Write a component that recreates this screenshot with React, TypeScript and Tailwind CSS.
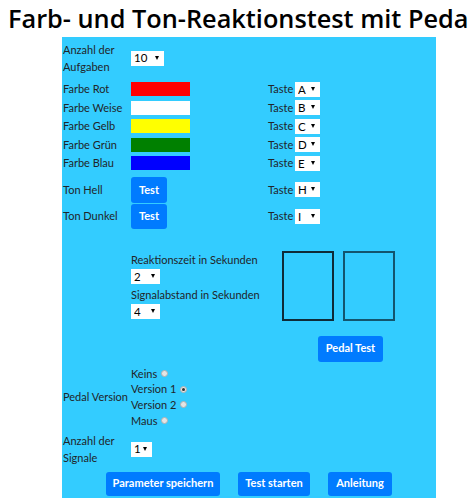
import React from 'react';

const font = { fontFamily: 'Lato, "Open Sans", "Liberation Sans", sans-serif' };
const titleFont = { fontFamily: '"Open Sans", "Liberation Sans", sans-serif' };

const Select: React.FC<{ value: string; options: string[]; width: string }> = ({ value, options, width }) => (
  <span className={`relative inline-flex h-[15px] shrink-0 items-center bg-white ${width}`}>
    <select
      defaultValue={value}
      className="h-full w-full appearance-none bg-transparent pl-[3px] text-[11.5px] leading-none text-black outline-none"
    >
      {options.map((o) => (
        <option key={o}>{o}</option>
      ))}
    </select>
    <span className="pointer-events-none absolute right-[5px] top-[5px] h-0 w-0 border-x-[2.5px] border-t-[4px] border-x-transparent border-t-black" />
  </span>
);

const Button: React.FC<{ children: React.ReactNode; className?: string }> = ({ children, className = '' }) => (
  <button
    className={`flex shrink-0 items-center justify-center whitespace-nowrap rounded-[3px] bg-[#007bff] text-[11px] font-bold text-white ${className}`}
  >
    {children}
  </button>
);

const Radio: React.FC<{ checked?: boolean }> = ({ checked }) => (
  <span className="ml-[4px] inline-flex h-[7px] w-[7px] items-center justify-center rounded-full border border-[#b0b0b0] bg-[#e4e4e4]">
    {checked && <span className="h-[3px] w-[3px] rounded-full bg-[#333]" />}
  </span>
);

const letters = ['A', 'B', 'C', 'D', 'E', 'F', 'G', 'H', 'I', 'J', 'K'];

const colors = [
  { name: 'Farbe Rot', bg: 'bg-[#ff0000]', key: 'A' },
  { name: 'Farbe Weise', bg: 'bg-white', key: 'B' },
  { name: 'Farbe Gelb', bg: 'bg-[#ffff00]', key: 'C' },
  { name: 'Farbe Grün', bg: 'bg-[#008000]', key: 'D' },
  { name: 'Farbe Blau', bg: 'bg-[#0000ff]', key: 'E' },
];

const Taste: React.FC<{ k: string }> = ({ k }) => (
  <div className="ml-auto flex w-[52px] items-center">
    <span className="w-[27px] shrink-0">Taste</span>
    <Select value={k} options={letters} width="w-[25px]" />
  </div>
);

export default function App() {
  return (
    <div className="h-[500px] w-[469px] overflow-hidden bg-white text-[#212529]" style={font}>
      <h1
        className="h-[37px] whitespace-nowrap pl-[8px] pt-[3px] text-[25.3px] font-semibold leading-[30px] text-black"
        style={titleFont}
      >
        Farb- und Ton-Reaktionstest mit Pedal
      </h1>
      <div className="ml-[62px] flex h-[461px] w-[374px] flex-col bg-[#33ccff] pl-[1px] pt-[3px] text-[11px]">
        {/* Anzahl der Aufgaben */}
        <div className="flex h-[36px] items-center">
          <div className="w-[68px] leading-[17px]">
            Anzahl der
            <br />
            Aufgaben
          </div>
          <Select value="10" options={['5', '10', '15', '20']} width="w-[33px]" />
        </div>

        {/* Farben */}
        <div className="mt-[4px] flex w-[257px] flex-col">
          {colors.map((c) => (
            <div key={c.name} className="flex h-[18.5px] items-center">
              <div className="w-[68px]">{c.name}</div>
              <div className={`h-[14px] w-[59px] ${c.bg}`} />
              <Taste k={c.key} />
            </div>
          ))}
        </div>

        {/* Töne */}
        <div className="mt-[4.5px] flex w-[257px] flex-col gap-[1px]">
          {[
            { name: 'Ton Hell', key: 'H' },
            { name: 'Ton Dunkel', key: 'I' },
          ].map((t) => (
            <div key={t.name} className="flex h-[25.5px] items-center">
              <div className="w-[68px]">{t.name}</div>
              <Button className="h-[25.5px] w-[36px]">Test</Button>
              <Taste k={t.key} />
            </div>
          ))}
        </div>

        {/* Zeiten und Pedal-Anzeige */}
        <div className="mt-[21.5px] flex pl-[68px]">
          <div className="w-[151px] leading-[17px]">
            <div>Reaktionszeit in Sekunden</div>
            <Select value="2" options={['1', '2', '3', '4', '5']} width="w-[29px]" />
            <div className="mt-[1px]">Signalabstand in Sekunden</div>
            <Select value="4" options={['2', '3', '4', '5', '6']} width="w-[29px]" />
          </div>
          <div className="flex flex-col">
            <div className="flex gap-[9px]">
              <div className="h-[70px] w-[52px] border-2 border-[#0f2b38]" />
              <div className="h-[70px] w-[52px] border-2 border-[#13556e]" />
            </div>
            <Button className="ml-[36px] mt-[15px] h-[26px] w-[65px]">Pedal Test</Button>
          </div>
        </div>

        {/* Pedal Version */}
        <div className="mt-[4px] flex items-center">
          <div className="w-[68px] whitespace-nowrap">Pedal Version</div>
          <div className="flex flex-col leading-[15.75px]">
            <div className="flex items-center">Keins<Radio /></div>
            <div className="flex items-center">Version 1<Radio checked /></div>
            <div className="flex items-center">Version 2<Radio /></div>
            <div className="flex items-center">Maus<Radio /></div>
          </div>
        </div>

        {/* Anzahl der Signale */}
        <div className="mt-[3.5px] flex items-center">
          <div className="w-[68px] leading-[17px]">
            Anzahl der
            <br />
            Signale
          </div>
          <Select value="1" options={['1', '2', '3']} width="w-[21px]" />
        </div>

        {/* Aktionen */}
        <div className="mt-[5.5px] flex justify-center gap-[18px] pr-[1px]">
          <Button className="h-[24px] w-[114px]">Parameter speichern</Button>
          <Button className="h-[24px] w-[72px]">Test starten</Button>
          <Button className="h-[24px] w-[64px]">Anleitung</Button>
        </div>
      </div>
    </div>
  );
}
